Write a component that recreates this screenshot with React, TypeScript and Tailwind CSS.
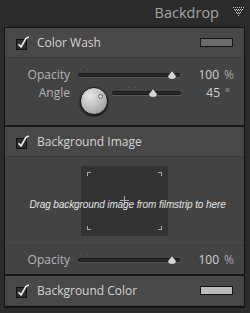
import React from "react";

const font = { fontFamily: '"Open Sans", "Noto Sans", sans-serif' };

function CheckBox() {
  return (
    <svg width="15" height="14" viewBox="0 0 15 14" className="shrink-0">
      <rect x="0.5" y="3.5" width="10" height="10" fill="#2e2e2e" stroke="#111" />
      <path d="M2.5 8.2 L5 11 L9.8 2.6 L12.6 0.8" fill="none" stroke="#f2f2f2" strokeWidth="1.6" strokeLinejoin="round" />
    </svg>
  );
}

function Collapse() {
  const dots: { x: number; y: number }[] = [];
  const ys = [0, 2, 3, 5, 6, 8];
  for (let r = 0; r < 6; r++) {
    for (let x = r; x <= 10 - r; x += 2) dots.push({ x, y: ys[r] });
  }
  return (
    <svg width="11" height="9" viewBox="0 0 11 9" className="shrink-0">
      {dots.map((d, i) => (
        <rect key={i} x={d.x} y={d.y} width="1" height="1" fill="#c4c4c4" />
      ))}
    </svg>
  );
}

function Thumb() {
  return (
    <svg width="10" height="10" viewBox="0 0 10 10">
      <path d="M5 0.6 L9.2 6 Q9.6 9.4 5 9.4 Q0.4 9.4 0.8 6 Z" fill="#d6d6d6" stroke="#2a2a2a" strokeWidth="0.8" />
    </svg>
  );
}

function Slider({ width, pos, ticks }: { width: string; pos: string; ticks: number }) {
  return (
    <div className={`relative h-[14px] shrink-0 ${width}`}>
      <div className="absolute left-[2px] right-[2px] top-[1px] flex justify-between">
        {Array.from({ length: ticks }).map((_, i) => (
          <span key={i} className="h-px w-px bg-[#5c5c5c]" />
        ))}
      </div>
      <div className="absolute left-0 right-0 top-[5px] h-[4px] rounded-full border border-[#1a1a1a] bg-[#2a2a2a] shadow-[0_1px_0_#5a5a5a]" />
      <div className={`absolute top-[2px] ${pos}`}>
        <Thumb />
      </div>
    </div>
  );
}

function Knob() {
  return (
    <div className="relative h-[28px] w-[28px] shrink-0 rounded-full border border-[#1b1b1b] bg-[radial-gradient(circle_at_35%_30%,#e6e6e6,#b8b8b8_55%,#8a8a8a)] shadow-[0_1px_2px_#000]">
      <div className="absolute left-[17px] top-[6px] h-[5px] w-[5px] rounded-full border border-[#6a6a6a] bg-[#d8d8d8]" />
    </div>
  );
}

function SectionHeader({ title, swatch }: { title: string; swatch?: string }) {
  return (
    <div className="flex h-[30px] items-center border-b border-[#3b3b3b] bg-[#484848] pl-[11px] pr-[11px]">
      <CheckBox />
      <span className="ml-[6px] text-[12px] text-[#d4d4d4]">{title}</span>
      {swatch && <div className={`ml-auto h-[9px] w-[33px] border border-[#141414] ${swatch}`} />}
    </div>
  );
}

function OpacityRow() {
  return (
    <div className="flex h-[17px] items-center">
      <span className="w-[65px] text-right text-[12px] text-[#b4b4b4]">Opacity</span>
      <div className="ml-[8px]">
        <Slider width="w-[102px]" pos="left-[89px]" ticks={14} />
      </div>
      <span className="w-[39px] text-right text-[12px] text-[#d0d0d0]">100</span>
      <span className="ml-[5px] text-[12px] text-[#a8a8a8]">%</span>
    </div>
  );
}

export default function App() {
  return (
    <div className="flex h-[313px] w-[250px] flex-col bg-[#2b2b2b]" style={font}>
      {/* Title */}
      <div className="flex h-[27px] shrink-0 items-center justify-end pr-[6px]">
        <span className="text-[14.5px] leading-none text-[#a4a4a4]">Backdrop</span>
        <div className="ml-[14px] mb-[4px]">
          <Collapse />
        </div>
      </div>

      {/* Panel */}
      <div className="ml-[4px] w-[241px] border border-[#121212] border-b-2 bg-[#434343]">
        {/* Color Wash */}
        <div className="border-b-2 border-[#171717]">
          <SectionHeader title="Color Wash" swatch="bg-[#6b6b6b]" />
          <div className="h-[67px] pt-[8px]">
            <OpacityRow />
            <div className="mt-[3px] flex items-start">
              <span className="h-[14px] w-[65px] text-right text-[12px] leading-[14px] text-[#b4b4b4]">Angle</span>
              <div className="ml-[10px] mt-[1px]">
                <Knob />
              </div>
              <div className="ml-[4px]">
                <Slider width="w-[69px]" pos="left-[36px]" ticks={10} />
              </div>
              <span className="h-[14px] w-[39px] text-right text-[12px] leading-[14px] text-[#d0d0d0]">45</span>
              <span className="ml-[5px] text-[11px] leading-[12px] text-[#a8a8a8]">°</span>
            </div>
          </div>
        </div>

        {/* Background Image */}
        <div className="border-b-2 border-[#171717]">
          <SectionHeader title="Background Image" />
          <div className="relative flex h-[117px] flex-col pt-[9px]">
            <div className="relative mx-auto h-[70px] w-[87px] bg-[#333333]">
              <span className="absolute left-[6px] top-[6px] h-[4px] w-[4px] border-l border-t border-[#a8a8a8]" />
              <span className="absolute right-[6px] top-[6px] h-[4px] w-[4px] border-r border-t border-[#a8a8a8]" />
              <span className="absolute bottom-[6px] left-[6px] h-[4px] w-[4px] border-b border-l border-[#a8a8a8]" />
              <span className="absolute bottom-[6px] right-[6px] h-[4px] w-[4px] border-b border-r border-[#a8a8a8]" />
              <span className="absolute left-[39px] top-[34px] h-px w-[9px] bg-[#a8a8a8]" />
              <span className="absolute left-[43px] top-[30px] h-[9px] w-px bg-[#a8a8a8]" />
            </div>
            <span
              className="absolute left-0 right-0 top-[41px] pl-[6px] text-center text-[10px] italic leading-[14px] tracking-[-0.1px] text-[#e4e4e4]"
              style={{ fontFamily: '"Liberation Sans", Arial, sans-serif' }}
            >
              Drag background image from filmstrip to here
            </span>
            <div className="mt-[6px] h-px bg-[#4d4d4d]" />
            <div className="mt-[8px]">
              <OpacityRow />
            </div>
          </div>
        </div>

        {/* Background Color */}
        <SectionHeader title="Background Color" swatch="bg-[#bcbcbc]" />
      </div>
    </div>
  );
}
